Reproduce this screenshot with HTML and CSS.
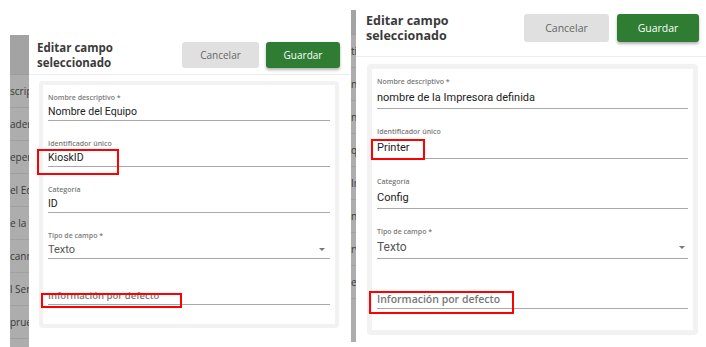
FILE: index.html
```html
<!DOCTYPE html>
<html>
<head>
<meta charset="UTF-8">
<title>Editar campo seleccionado</title>
<link rel="stylesheet" href="styles.css">
</head>
<body>
<div class="page">

  <!-- first capture: Equipo -->
  <div class="shot-left">
    <div class="backdrop">
      <div class="backdrop-head"></div>
      <div class="backdrop-row">scripti</div>
      <div class="backdrop-row">adena</div>
      <div class="backdrop-row">epend</div>
      <div class="backdrop-row">el Eq</div>
      <div class="backdrop-row">e la In</div>
      <div class="backdrop-row">canne</div>
      <div class="backdrop-row">l Serv</div>
      <div class="backdrop-row">prueb</div>
    </div>
    <div class="dialog dialog-small">
      <div class="dialog-head">
        <h2 class="dialog-title">Editar campo<br>seleccionado</h2>
        <div class="dialog-actions">
          <button class="btn btn-cancel">Cancelar</button>
          <button class="btn btn-save">Guardar</button>
        </div>
      </div>
      <div class="form-card">
        <div class="field">
          <div class="field-label">Nombre descriptivo *</div>
          <div class="field-value">Nombre del Equipo</div>
        </div>
        <div class="field">
          <div class="field-label">Identificador único</div>
          <div class="field-value">KioskID</div>
        </div>
        <div class="field">
          <div class="field-label">Categoría</div>
          <div class="field-value">ID</div>
        </div>
        <div class="field">
          <div class="field-label">Tipo de campo *</div>
          <div class="field-value field-select"><span>Texto</span><i class="caret"></i></div>
        </div>
        <div class="field field-last">
          <div class="field-label"></div>
          <div class="field-value field-placeholder">Información por defecto</div>
        </div>
      </div>
      <div class="mark mark-a1"></div>
      <div class="mark mark-a2"></div>
    </div>
  </div>

  <!-- second capture: Impresora -->
  <div class="backdrop backdrop-thin">
    <div class="backdrop-head"></div>
    <div class="backdrop-row">ti</div>
    <div class="backdrop-row">na</div>
    <div class="backdrop-row">nc</div>
    <div class="backdrop-row">q</div>
    <div class="backdrop-row">Ir</div>
    <div class="backdrop-row">n</div>
    <div class="backdrop-row">rv</div>
    <div class="backdrop-row">eb</div>
  </div>
  <div class="dialog dialog-large">
    <div class="dialog-head">
      <h2 class="dialog-title">Editar campo<br>seleccionado</h2>
      <div class="dialog-actions">
        <button class="btn btn-cancel">Cancelar</button>
        <button class="btn btn-save">Guardar</button>
      </div>
    </div>
    <div class="form-card">
      <div class="field">
        <div class="field-label">Nombre descriptivo *</div>
        <div class="field-value">nombre de la Impresora definida</div>
      </div>
      <div class="field">
        <div class="field-label">Identificador único</div>
        <div class="field-value">Printer</div>
      </div>
      <div class="field">
        <div class="field-label">Categoría</div>
        <div class="field-value">Config</div>
      </div>
      <div class="field">
        <div class="field-label">Tipo de campo *</div>
        <div class="field-value field-select"><span>Texto</span><i class="caret"></i></div>
      </div>
      <div class="field field-last">
        <div class="field-label"></div>
        <div class="field-value field-placeholder">Información por defecto</div>
      </div>
    </div>
    <div class="mark mark-b1"></div>
    <div class="mark mark-b2"></div>
  </div>

</div>
</body>
</html>
```

FILE: styles.css
```css
body {
	margin: 0;
	padding: 0;
	background: #ffffff;
	font-family: "Open Sans", "Liberation Sans", sans-serif;
	color: #333333;
}

.page {
	display: flex;
	width: 706px;
	height: 347px;
	overflow: hidden;
}

.shot-left {
	display: flex;
	width: 340px;
	padding: 35px 0 0 10px;
}

/* darkened table behind the dialogs */
.backdrop {
	width: 19px;
	height: 312px;
	background: #adadad;
	overflow: hidden;
	white-space: nowrap;
	font-size: 10px;
	color: #3a3a3a;
}

.backdrop-head {
	height: 39px;
	background: #a3a3a3;
	border-bottom: 1px solid #9c9c9c;
}

.backdrop-row {
	height: 32px;
	line-height: 32px;
	border-bottom: 1px solid #a0a0a0;
}

.backdrop-thin {
	width: 5px;
	height: 332px;
	margin: 10px 0 0 1px;
}

.backdrop-thin .backdrop-head {
	height: 24px;
}

.dialog {
	position: relative;
	background: #ffffff;
}

.dialog-small {
	width: 321px;
	height: 312px;
}

.dialog-large {
	width: 350px;
	height: 347px;
}

.dialog-head {
	display: flex;
	align-items: center;
	border-bottom: 1px solid #ededed;
}

.dialog-small .dialog-head {
	height: 39px;
	padding: 0 10px 0 8px;
}

.dialog-large .dialog-head {
	height: 56px;
	padding: 0 7px 0 10px;
}

.dialog-title {
	margin: 0;
	font-weight: 700;
	line-height: 15px;
	color: #3a3a3a;
}

.dialog-small .dialog-title {
	font-size: 11.5px;
}

.dialog-large .dialog-title {
	font-size: 12.5px;
}

.dialog-actions {
	display: flex;
	margin-left: auto;
}

.btn {
	border: none;
	border-radius: 3px;
	padding: 0;
	font-family: "Open Sans", "Liberation Sans", sans-serif;
	cursor: pointer;
}

.btn-cancel {
	background: #e0e0e0;
	color: #666666;
}

.btn-save {
	background: #2e7d32;
	color: #ffffff;
	box-shadow: 0 2px 3px rgba(0, 0, 0, 0.3);
}

.dialog-small .dialog-actions {
	gap: 7px;
}

.dialog-small .btn {
	height: 26px;
	font-size: 10px;
}

.dialog-small .btn-cancel {
	width: 77px;
}

.dialog-small .btn-save {
	width: 74px;
}

.dialog-large .dialog-actions {
	gap: 8px;
}

.dialog-large .btn {
	height: 28px;
	font-size: 10.5px;
}

.dialog-large .btn-cancel {
	width: 85px;
}

.dialog-large .btn-save {
	width: 82px;
}

/* form */
.form-card {
	border: 4px solid #f2f2f2;
	border-radius: 4px;
	background: #ffffff;
}

.dialog-small .form-card {
	margin: 6px 11px 0 10px;
	padding: 8px 5px 19px;
}

.dialog-large .form-card {
	margin: 7px 8px 0 11px;
	border-width: 5px;
	padding: 7px 5px 21px;
}

.field-label {
	font-size: 7px;
	font-weight: 600;
	color: #7a7a7a;
}

.field-value {
	font-family: Roboto, "Liberation Sans", sans-serif;
	color: #222222;
	border-bottom: 1px solid #a8a8a8;
}

.dialog-small .field {
	margin-bottom: 18px;
}

.dialog-small .field-label {
	height: 10px;
	line-height: 10px;
}

.dialog-small .field-value {
	height: 17px;
	line-height: 17px;
	font-size: 10.5px;
}

.dialog-large .field {
	margin-bottom: 17px;
}

.dialog-large .field-label {
	height: 11px;
	line-height: 11px;
}

.dialog-large .field-value {
	height: 21px;
	line-height: 21px;
	font-size: 11px;
}

.dialog-small .field-last,
.dialog-large .field-last {
	margin-bottom: 0;
}

.field-select {
	display: flex;
	justify-content: space-between;
	align-items: center;
	color: #555555;
}

.dialog-small .field-select {
	font-size: 11px;
	padding-right: 5px;
}

.dialog-large .field-select {
	font-size: 12px;
	padding-right: 3px;
}

.caret {
	width: 0;
	height: 0;
	border-left: 3px solid transparent;
	border-right: 3px solid transparent;
	border-top: 3px solid #777777;
}

.field-placeholder {
	font-family: "Open Sans", "Liberation Sans", sans-serif;
	font-weight: 600;
	color: #777777;
}

.dialog-small .field-placeholder {
	font-size: 9.5px;
}

.dialog-large .field-placeholder {
	font-size: 10.5px;
	line-height: 25px;
}

/* red annotation boxes */
.mark {
	position: absolute;
	box-sizing: border-box;
	border: 2px solid #ff0000;
}

.mark-a1 {
	left: 8px;
	top: 114px;
	width: 82px;
	height: 26px;
}

.mark-a2 {
	left: 12px;
	top: 258px;
	width: 141px;
	height: 15px;
}

.mark-b1 {
	left: 15px;
	top: 139px;
	width: 54px;
	height: 21px;
}

.mark-b2 {
	left: 13px;
	top: 291px;
	width: 145px;
	height: 23px;
}
```
